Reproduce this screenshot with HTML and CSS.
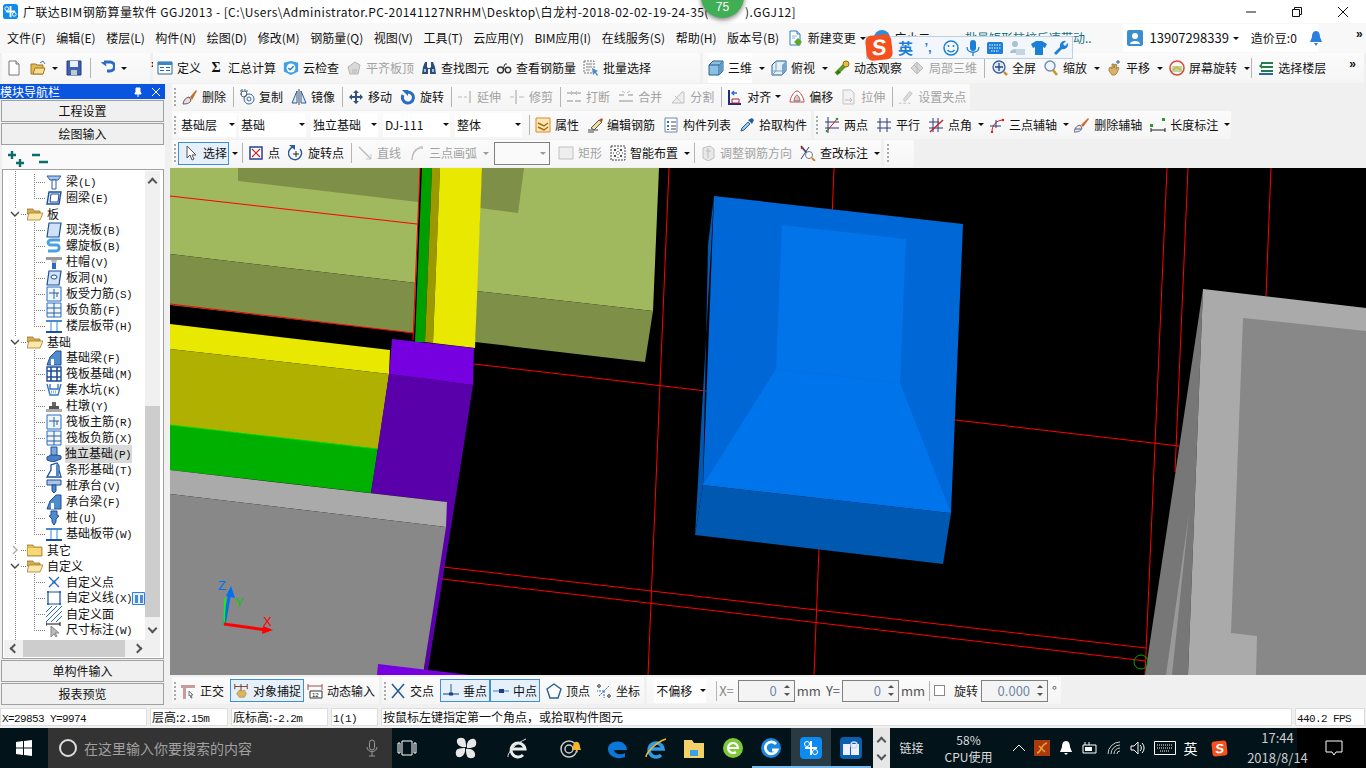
FILE: index.html
```html
<!DOCTYPE html>
<html lang="zh-CN">
<head>
<meta charset="utf-8">
<title>广联达BIM钢筋算量软件 GGJ2013</title>
<link rel="stylesheet" href="styles.css">
</head>
<body>
<svg class="defs" aria-hidden="true">
<defs>
<symbol id="new" viewBox="0 0 16 16"><path d="M3 1h7l3 3v11H3z" fill="#fff" stroke="#777"/><path d="M10 1v3h3" fill="#ddd" stroke="#777"/></symbol>
<symbol id="chg" viewBox="0 0 16 16"><path d="M2 1h7l3 3v11H2z" fill="#fff" stroke="#2a7fc8"/><path d="M9 1v3h3" fill="#cfe4f6" stroke="#2a7fc8"/><path d="M4 6h5M4 8h3" stroke="#8ab4dc"/><path d="M10 8l4 4-4 4-4-4z" fill="#5aa82a"/></symbol>
<symbol id="open" viewBox="0 0 16 16"><path d="M1 4h5l1 1h6v9H1z" fill="#e3b857" stroke="#a07a25"/><path d="M3 14l2-6h10l-2 6z" fill="#f7dd8f" stroke="#a07a25"/><path d="M10 3l3-2 2 3" fill="none" stroke="#3a7bc8"/></symbol>
<symbol id="save" viewBox="0 0 16 16"><path d="M1 1h14v14H1z" fill="#3f5fb0" stroke="#223a80"/><path d="M4 1h8v6H4z" fill="#eef"/><path d="M5 10h6v5H5z" fill="#bcc"/></symbol>
<symbol id="undo" viewBox="0 0 16 16"><path d="M5 2h6a4 4 0 0 1 0 9H8" fill="none" stroke="#2a6cc4" stroke-width="3"/><path d="M2 2h5v5z" fill="#2a6cc4" transform="rotate(-10 4 4)"/></symbol>
<symbol id="def" viewBox="0 0 16 16"><path d="M1 2h14v12H1z" fill="#fff" stroke="#28689c"/><path d="M1 2h14v3H1z" fill="#3a86c0"/><path d="M3 7h4v1H3zM3 10h4v1H3zM9 7h4v1H9zM9 10h4v1H9z" fill="#28689c"/></symbol>
<symbol id="cloud" viewBox="0 0 18 18"><path d="M1 3l8-2 8 2v10l-8 4-8-4z" fill="#3ba0e6"/><circle cx="9" cy="9" r="5" fill="#fff"/><path d="M6 9l2 2 4-4" fill="none" stroke="#2b7fc4" stroke-width="1.6"/></symbol>
<symbol id="flat" viewBox="0 0 16 16"><path d="M2 7l7-5 5 3-2 9H4z" fill="#d8d8d8" stroke="#b5b5b5"/><path d="M6 9h5v5H6z" fill="#c8c8c8"/></symbol>
<symbol id="binoc" viewBox="0 0 16 16"><path d="M2 7l2-5h2v5l1 1h2l1-1V2h2l2 5 1 7H9V9H7v5H1z" fill="#2c4d78"/><path d="M3 9h2v3H3zM11 9h2v3h-2z" fill="#9bc0e8"/></symbol>
<symbol id="glass" viewBox="0 0 16 16"><circle cx="4.5" cy="10" r="3" fill="none" stroke="#333" stroke-width="1.4"/><circle cx="12" cy="10" r="2.7" fill="none" stroke="#333" stroke-width="1.4"/><path d="M7 9l2-5h2M7.5 9h2" fill="none" stroke="#333"/></symbol>
<symbol id="batch" viewBox="0 0 16 16"><path d="M1 1h10v12H1z" fill="#f4f4f4" stroke="#777" stroke-dasharray="2 1"/><path d="M3 4h6M3 7h6M3 10h4" stroke="#888"/><path d="M9 8l6 3-2 1 2 3-1 1-2-3-2 2z" fill="#4f8ac8"/></symbol>
<symbol id="cube" viewBox="0 0 16 16"><path d="M1 5l4-4h10v10l-4 4H1z" fill="#8cc0e4" stroke="#2a5f88"/><path d="M1 5h10v10M11 5l4-4" fill="none" stroke="#2a5f88"/><path d="M11 5l4-4v10l-4 4z" fill="#5d9cc8"/></symbol>
<symbol id="cube2" viewBox="0 0 16 16"><path d="M1 5l4-4h10v10l-4 4H1z" fill="#e4f0f8" stroke="#2a5f88"/><path d="M5 1v10H1M5 11l-4 4M5 11h10" stroke="#7aa4c0" fill="none"/><path d="M11 5l4-4v10l-4 4z" fill="#74a8cc"/></symbol>
<symbol id="orbit" viewBox="0 0 16 16"><path d="M2 14L12 4" stroke="#5a9a28" stroke-width="4"/><path d="M2 14l2-4 3 3z" fill="#2e6a12"/><circle cx="12" cy="4" r="3" fill="#e8c040" stroke="#8a7010"/></symbol>
<symbol id="local" viewBox="0 0 16 16"><path d="M2 8l6-6 6 6-6 6z" fill="#d8d8d8" stroke="#bbb"/><path d="M5 5l6 6M8 2v12" stroke="#bbb"/></symbol>
<symbol id="full" viewBox="0 0 16 16"><circle cx="7" cy="7" r="6" fill="#dce8f6" stroke="#3a5f96" stroke-width="1.3"/><path d="M7 3v8M3 7h8" stroke="#25477a" stroke-width="1.3"/><path d="M12 12l3 3" stroke="#c78a20" stroke-width="2.4"/></symbol>
<symbol id="zoom" viewBox="0 0 16 16"><circle cx="7" cy="6" r="5" fill="#eef4fb" stroke="#6f8eae" stroke-width="1.4"/><path d="M10 10l4 5" stroke="#c7972a" stroke-width="2.6"/></symbol>
<symbol id="hand" viewBox="0 0 16 16"><path d="M3 8l2-1 1 2V4h2v4l1-4 2 1-1 4 2-2 1 1-2 5-2 2H6L3 11z" fill="#dcb266" stroke="#8a6a2c" stroke-width=".7"/><path d="M12 0v4M10 2h4" stroke="#3a5f96"/></symbol>
<symbol id="screen" viewBox="0 0 16 16"><circle cx="8" cy="8" r="7" fill="none" stroke="#d84a3a" stroke-width="1.6"/><path d="M3 6h10v6H3z" fill="#b8d8a0"/><path d="M4 10l4-3 4 3" stroke="#d4b030" fill="none" stroke-width="1.4"/></symbol>
<symbol id="floor" viewBox="0 0 16 16"><path d="M3 3h12M3 7h12M3 11h12" stroke="#277a50" stroke-width="2"/><path d="M1 13h14v2H1z" fill="#2c66a8"/><path d="M1 6l3-3v6z" fill="#1d8a40"/></symbol>
<symbol id="del" viewBox="0 0 16 16"><path d="M1 15c1-5 3-6 6-7l2 3c-1 3-3 4-8 4z" fill="#f0d8e8" stroke="#555"/><path d="M8 8l6-7 1 1-5 9z" fill="#c86a2a"/></symbol>
<symbol id="copy" viewBox="0 0 16 16"><path d="M2 1h6v3M2 1v6" fill="none" stroke="#36689c" stroke-dasharray="2 1"/><circle cx="5" cy="5" r="3" fill="none" stroke="#666"/><circle cx="10" cy="10" r="5" fill="none" stroke="#36689c"/><circle cx="10" cy="10" r="2" fill="none" stroke="#36689c"/></symbol>
<symbol id="mirror" viewBox="0 0 16 16"><path d="M1 14L6 2v12zM15 14L10 2v12z" fill="#dfe9f5" stroke="#2c5a96"/><path d="M8 0v16" stroke="#444"/></symbol>
<symbol id="move" viewBox="0 0 16 16"><path d="M8 1l3 3H9v3h3V5l3 3-3 3V9H9v3h2l-3 3-3-3h2V9H4v2L1 8l3-3v2h3V4H5z" fill="#31507e"/></symbol>
<symbol id="rot" viewBox="0 0 16 16"><path d="M8 3a5.5 5.5 0 1 1-5 3" fill="none" stroke="#2a6cc4" stroke-width="3"/><path d="M2 1h6v6z" fill="#2a6cc4"/></symbol>
<symbol id="extend" viewBox="0 0 16 16"><path d="M1 8h4M7 8h3" stroke="#bbb"/><path d="M12 2h2v12h-2z" fill="#ccc"/></symbol>
<symbol id="trim" viewBox="0 0 16 16"><path d="M6 1h2v14H6z" fill="#ccc"/><path d="M1 8h4M10 8h5" stroke="#bbb"/></symbol>
<symbol id="break" viewBox="0 0 16 16"><path d="M1 4h14M1 12h6M9 12h6" stroke="#c4c4c4" stroke-width="2"/><path d="M5 2l2 2-2 2M11 2L9 4l2 2" stroke="#bbb" fill="none"/></symbol>
<symbol id="merge" viewBox="0 0 16 16"><path d="M1 12h14" stroke="#c4c4c4" stroke-width="2"/><path d="M1 6h5M10 6h5" stroke="#c4c4c4" stroke-width="2"/><path d="M4 2l3 2M12 2L9 4" stroke="#bbb"/></symbol>
<symbol id="split" viewBox="0 0 16 16"><path d="M2 14L12 3h2v11z" fill="#eee" stroke="#c0c0c0"/><path d="M5 7l7 7" stroke="#c8c8c8"/></symbol>
<symbol id="align" viewBox="0 0 16 16"><path d="M2 1v14h12" stroke="#222a7a" stroke-width="2" fill="none"/><path d="M5 10h7v4H5z" fill="none" stroke="#b02020"/><path d="M5 4h5M7 2L5 4l2 2" fill="none" stroke="#2a6cc4" stroke-width="1.4"/></symbol>
<symbol id="offset" viewBox="0 0 16 16"><path d="M1 13c0-4 4-11 7-11s7 7 7 11z" fill="#fff" stroke="#c44"/><path d="M5 12c0-3 2-6 3-6s3 3 3 6z" fill="#e9c0c0" stroke="#777"/></symbol>
<symbol id="stretch" viewBox="0 0 16 16"><path d="M2 1h8l3 3v11H2z" fill="#f2f2f2" stroke="#c4c4c4"/><path d="M4 11h7M9 9l2 2-2 2" fill="none" stroke="#bbb"/></symbol>
<symbol id="grips" viewBox="0 0 18 16"><path d="M1 15h3M6 15h3M11 15h3" stroke="#bbb"/><path d="M6 11l7-9 3 2-8 9z" fill="#ddd" stroke="#bbb"/></symbol>
<symbol id="attr" viewBox="0 0 16 16"><path d="M1 1h14v14H1z" fill="#fbe7b8" stroke="#e08a20"/><path d="M3 6l6 3 4-3M3 10l6 3 4-3" fill="none" stroke="#a06a10" stroke-width="1.4"/></symbol>
<symbol id="edit" viewBox="0 0 16 16"><path d="M1 13h10M1 15h6" stroke="#444"/><path d="M4 11l8-8 3 2-8 8z" fill="#f0e0a0" stroke="#555"/><path d="M12 3l3-2 1 2-2 2z" fill="#c43"/></symbol>
<symbol id="list" viewBox="0 0 16 16"><path d="M2 1h12v14H2z" fill="#fff" stroke="#6a8aae"/><path d="M4 4h2v2H4zM4 8h2v2H4zM4 12h2v1H4z" fill="#2a6cc4"/><path d="M8 5h5M8 9h5M8 12h5" stroke="#444"/></symbol>
<symbol id="pick" viewBox="0 0 16 16"><path d="M2 14l1-3 6-6 2 2-6 6z" fill="#9cc8ee" stroke="#2a5f96"/><path d="M9 3l4-2 2 2-2 4z" fill="#2a5f96"/></symbol>
<symbol id="two" viewBox="0 0 16 16"><path d="M1 5h14M1 11h14" stroke="#2c3a78"/><path d="M4 0v16" stroke="#2c3a78"/><path d="M3 14L13 2" stroke="#c22"/><circle cx="3" cy="14" r="1.3" fill="#2a9a2a"/><circle cx="13" cy="2" r="1.3" fill="#2a9a2a"/></symbol>
<symbol id="para" viewBox="0 0 16 16"><path d="M1 5h14M1 11h14M4 1v14M11 1v14" stroke="#2c3a78"/></symbol>
<symbol id="ang" viewBox="0 0 16 16"><path d="M1 11h14M1 5h10M5 1v14M10 1v14" stroke="#2c3a78"/><path d="M2 15L15 3" stroke="#c22" stroke-width="1.5"/></symbol>
<symbol id="arc3" viewBox="0 0 16 16"><path d="M3 15c0-7 4-12 12-12" fill="none" stroke="#c22"/><path d="M1 9h11M7 3v8" stroke="#2c3a78"/><circle cx="3" cy="15" r="1.2" fill="#c22"/><circle cx="14" cy="3" r="1.2" fill="#c22"/></symbol>
<symbol id="delax" viewBox="0 0 16 16"><path d="M0 15c1-5 3-6 6-7l2 3c-1 3-3 4-8 4z" fill="#efe6f2" stroke="#667"/><path d="M7 8l7-7 1 1-6 8z" fill="#c86a2a"/><path d="M1 12h6" stroke="#36689c"/></symbol>
<symbol id="dim" viewBox="0 0 16 16"><path d="M1 13h14M1 11v4M15 11v4" stroke="#222"/><rect x="0" y="7" width="3" height="3" fill="#2a9a2a"/><rect x="12" y="1" width="3" height="3" fill="#2a9a2a"/></symbol>
<symbol id="sel" viewBox="0 0 16 16"><path d="M4 1v12l3-3 2 5 2-1-2-4h4z" fill="#fff" stroke="#555"/></symbol>
<symbol id="pt" viewBox="0 0 16 16"><path d="M2 2h12v12H2z" fill="#fff" stroke="#2a3f9a" stroke-width="1.5"/><path d="M4 4l8 8M12 4l-8 8" stroke="#c22" stroke-width="1.2"/></symbol>
<symbol id="rotp" viewBox="0 0 16 16"><path d="M5 2a6.5 6.5 0 1 0 7 2" fill="none" stroke="#2c5a96" stroke-width="1.4"/><path d="M1 0h6v5z" fill="#2c5a96"/><path d="M8 6v6M5 9h6" stroke="#222"/></symbol>
<symbol id="lin" viewBox="0 0 16 16"><path d="M2 2l12 12" stroke="#bbb" stroke-width="1.4"/><path d="M14 14V9M14 14H9" stroke="#ccc"/></symbol>
<symbol id="arc" viewBox="0 0 16 16"><path d="M3 15C3 8 7 4 12 2" fill="none" stroke="#bbb" stroke-width="1.4"/><rect x="11" y="1" width="3" height="3" fill="#ccc"/></symbol>
<symbol id="rct" viewBox="0 0 16 16"><path d="M1 2h14v12H1z" fill="#eee" stroke="#c0c0c0"/></symbol>
<symbol id="smart" viewBox="0 0 16 16"><path d="M1 1h14v14H1z" fill="#f8f8f8" stroke="#444" stroke-dasharray="2 1"/><path d="M8 3v10M3 8h10" stroke="#444" stroke-dasharray="1 2"/><circle cx="5" cy="5" r="1" fill="#222"/><circle cx="11" cy="11" r="1" fill="#222"/><circle cx="11" cy="5" r="1" fill="#222"/><circle cx="5" cy="11" r="1" fill="#222"/></symbol>
<symbol id="adj" viewBox="0 0 16 16"><path d="M3 3l7-2 4 3v9l-6 3-5-3z" fill="#e8e8e8" stroke="#c0c0c0"/><path d="M6 6h5M8 3v10" stroke="#bbb"/></symbol>
<symbol id="chk" viewBox="0 0 16 16"><path d="M1 1l9 11" stroke="#2c3a78" stroke-width="1.6"/><path d="M1 14L9 2" stroke="#2c3a78"/><circle cx="9" cy="10" r="3.5" fill="#fff" stroke="#777"/><path d="M12 13l3 3" stroke="#c78a20" stroke-width="2"/><circle cx="2" cy="3" r="1.3" fill="#c22"/></symbol>
<symbol id="orth" viewBox="0 0 16 16"><path d="M1 2h14v3H1zM3 5h3v11H3z" fill="#c89a9a"/><path d="M9 8l4 4-2 0 1 3-1 0-1-3-1 1z" fill="#eee" stroke="#778"/></symbol>
<symbol id="snap" viewBox="0 0 18 18"><path d="M2 4h14M2 1v6M16 1v6M9 1v9" stroke="#7a4a3a" stroke-width="1.2"/><path d="M4 12l3-4 3 1 3-1 2 4-2 4H7z" fill="#dcb65e" stroke="#a88838" stroke-width=".7"/></symbol>
<symbol id="dyn" viewBox="0 0 16 16"><path d="M1 1v6M15 1v6M1 3h14" stroke="#a05050"/><path d="M3 8h12v7H3z" fill="#fff" stroke="#333"/><text x="5" y="14" font-size="6" font-family="Liberation Sans" fill="#111">12</text></symbol>
<symbol id="cross" viewBox="0 0 16 16"><path d="M2 1l12 14M14 1L2 15" stroke="#2a5f96" stroke-width="1.6"/></symbol>
<symbol id="perp" viewBox="0 0 16 16"><path d="M8 1v10" stroke="#2a5f96"/><path d="M0 11h16" stroke="#2a5f96" stroke-width="1.2"/><rect x="6" y="9.500" width="4" height="3" fill="#1a3f86"/></symbol>
<symbol id="mid" viewBox="0 0 16 16"><path d="M0 8h16" stroke="#6a9ad0" stroke-width="1.4"/><rect x="6" y="6" width="5" height="4" fill="#1a3f86"/></symbol>
<symbol id="vtx" viewBox="0 0 16 16"><path d="M8 1l7 5-3 9H4L1 6z" fill="#fff" stroke="#2a5f96" stroke-width="1.4"/></symbol>
<symbol id="coord" viewBox="0 0 16 16"><path d="M3 13l5-5 5-5M8 8v7M8 8H1" stroke="#2a6cc4" stroke-dasharray="2 1"/><circle cx="3" cy="3" r="1.300" fill="none" stroke="#333"/><circle cx="13" cy="13" r="1.300" fill="none" stroke="#333"/></symbol>
<symbol id="fold" viewBox="0 0 16 16"><path d="M0 3h6l1 2h8v9H0z" fill="#e8b94f" stroke="#9a7a34" stroke-width=".8"/><path d="M1 6h13v7H1z" fill="#f8d973"/></symbol>
<symbol id="foldo" viewBox="0 0 16 16"><path d="M0 3h6l1 2h6v3H0z" fill="#dca94a" stroke="#9a7a34" stroke-width=".8"/><path d="M0 14l2-7h14l-3 7z" fill="#fbe7a6" stroke="#a08232" stroke-width=".8"/></symbol>
<symbol id="t-beam" viewBox="0 0 16 16"><path d="M1 2h14l-3 4H4z" fill="#a7c6e8" stroke="#2a5fa8"/><path d="M6 6h4v9H6z" fill="#fff" stroke="#2a5fa8"/></symbol>
<symbol id="t-ring" viewBox="0 0 16 16"><path d="M3 2h12l-2 12H1z" fill="#dceaf8" stroke="#1d4f9a" stroke-width="1.4"/><path d="M5 4h8l-1 8H4z" fill="#fff" stroke="#1d4f9a"/></symbol>
<symbol id="t-slab" viewBox="0 0 16 16"><path d="M3 1h12l-2 14H1z" fill="#cfe2f6" stroke="#1d4f9a" stroke-width="1.2"/></symbol>
<symbol id="t-spi" viewBox="0 0 16 16"><path d="M14 2H6C1 2 1 7 5 7h6c3 0 3 6-1 6H2" fill="none" stroke="#4aa0e0" stroke-width="3"/></symbol>
<symbol id="t-cap" viewBox="0 0 16 16"><path d="M0 3h16v3H0z" fill="#999"/><path d="M5 6h6l-1 3H6z" fill="#bbb"/><path d="M6 9h4v6H6z" fill="#2a6cc4"/></symbol>
<symbol id="t-hole" viewBox="0 0 16 16"><path d="M3 1h12l-2 14H1z" fill="#cfe2f6" stroke="#1d4f9a" stroke-width="1.2"/><ellipse cx="8" cy="7" rx="3" ry="2" fill="#fff" stroke="#1d4f9a"/></symbol>
<symbol id="t-r1" viewBox="0 0 16 16"><path d="M1 1h14v14H1z" fill="#eef5fc" stroke="#2a6cc4"/><path d="M8 3v10M3 7h10M11 7v4" stroke="#2a5f96"/></symbol>
<symbol id="t-r2" viewBox="0 0 16 16"><path d="M1 1h14v14H1z" fill="#eef5fc" stroke="#2a6cc4"/><path d="M8 1v14M1 6h14M1 11h14" stroke="#2a5f96"/></symbol>
<symbol id="t-band" viewBox="0 0 16 16"><path d="M0 2h16v2H0z" fill="#4a8ad0"/><path d="M4 4h2v9H4zM10 4h2v9h-2z" fill="#9bc4ea"/><path d="M0 13h16v2H0z" fill="#1d4f9a"/></symbol>
<symbol id="t-fb" viewBox="0 0 16 16"><path d="M1 15l3-8 6-6h5v14z" fill="#4f8ccc" stroke="#1d4f9a"/><path d="M5 9h3v6H5z" fill="#fff"/></symbol>
<symbol id="t-raft" viewBox="0 0 16 16"><path d="M1 1h14v14H1z" fill="#fff" stroke="#1d4f9a" stroke-width="1.4"/><path d="M1 5h14M1 11h14M5 1v14M11 1v14" stroke="#1d4f9a" stroke-width="1.6"/></symbol>
<symbol id="t-pit" viewBox="0 0 16 16"><path d="M1 2l3 11h8l3-11M4 2v5h8V2" fill="none" stroke="#3a7ac0" stroke-width="1.4"/><path d="M5 10h6" stroke="#8ab4dc" stroke-dasharray="1 1" stroke-width="3"/></symbol>
<symbol id="t-pier" viewBox="0 0 16 16"><path d="M0 11h16v3H0z" fill="#aaa"/><path d="M3 8h10v3H3z" fill="#555"/><path d="M6 4h4v4H6z" fill="#666"/></symbol>
<symbol id="t-fnd" viewBox="0 0 16 16"><path d="M1 11l6-3 8 2v3l-8 3-6-2z" fill="#4a82c4" stroke="#1d4f9a"/><path d="M5 1h6v8H5z" fill="#7aa8d8" stroke="#1d4f9a"/></symbol>
<symbol id="t-str" viewBox="0 0 16 16"><path d="M1 15l4-7V3l6-2 2 3v4l2 7z" fill="#fff" stroke="#1d4f9a" stroke-width="1.3"/><path d="M10 2l3 2v11h-3z" fill="#4f8ccc"/></symbol>
<symbol id="t-pc" viewBox="0 0 16 16"><path d="M1 2h14v5H1z" fill="#a7c6e8" stroke="#1d4f9a"/><path d="M6 7h4v6l-2 2-2-2z" fill="#4f8ccc" stroke="#1d4f9a"/></symbol>
<symbol id="t-pile" viewBox="0 0 16 16"><path d="M5 1h6v4l2 1-3 3v3l-2 3-2-3V9L3 6l2-1z" fill="#4f8ccc" stroke="#1d4f9a"/></symbol>
<symbol id="t-cp" viewBox="0 0 16 16"><path d="M3 3l10 10M13 3L3 13" stroke="#2a6cc4" stroke-width="1.4"/><circle cx="8" cy="8" r="1.5" fill="#2a6cc4"/></symbol>
<symbol id="t-cl" viewBox="0 0 16 16"><path d="M2 2h12v12H2z" fill="none" stroke="#1d4f9a" stroke-width="1.2"/><path d="M1 1h2v2H1zM13 1h2v2h-2zM1 13h2v2H1zM13 13h2v2h-2z" fill="#2a6cc4"/></symbol>
<symbol id="t-cf" viewBox="0 0 16 16"><path d="M1 1h14v14H1z" fill="#fff"/><path d="M0 6l6-6M0 11L11 0M0 16L16 0M5 16L16 5M10 16l6-6" stroke="#2a6cc4"/></symbol>
<symbol id="t-dim" viewBox="0 0 16 16"><path d="M0 2h14M0 0v4M14 0v4" stroke="#111"/><path d="M5 4v11l3-3 2 3 1-1-2-3h4z" fill="#bbb" stroke="#888"/></symbol>
</defs>
</svg>

<div class="app">
  <header class="title">
    <svg class="appicon" viewBox="0 0 16 16"><rect width="16" height="16" rx="3" fill="#0d8bf0"/><path d="M8 2v12M3 8h10" stroke="#fff" stroke-width="2"/><circle cx="4" cy="5" r="2" fill="none" stroke="#fff"/><circle cx="12" cy="11" r="2" fill="none" stroke="#fff"/></svg>
    <span class="title-text">广联达BIM钢筋算量软件 GGJ2013 - [C:\Users\Administrator.PC-20141127NRHM\Desktop\白龙村-2018-02-02-19-24-35(</span>
    <span class="title-end">).GGJ12]</span>
    <div class="winbtns">
      <span class="wb"><svg viewBox="0 0 12 12"><path d="M1 6h10" stroke="#111"/></svg></span>
      <span class="wb"><svg viewBox="0 0 12 12"><path d="M1.500 3.500h7v7h-7zM3.500 3.500v-2h7v7h-2" fill="none" stroke="#111"/></svg></span>
      <span class="wb"><svg viewBox="0 0 12 12"><path d="M1 1l10 10M11 1L1 11" stroke="#111"/></svg></span>
    </div>
  </header>

  <nav class="menu">
    <span>文件(F)</span><span>编辑(E)</span><span>楼层(L)</span><span>构件(N)</span><span>绘图(D)</span><span>修改(M)</span><span>钢筋量(Q)</span><span>视图(V)</span><span>工具(T)</span><span>云应用(Y)</span><span>BIM应用(I)</span><span>在线服务(S)</span><span>帮助(H)</span><span>版本号(B)</span>
    <span class="it"><svg class="ic"><use href="#chg"/></svg>新建变更<i class="dd"></i></span>
    <span class="it xiao"><svg class="ic"><circle cx="8" cy="8" r="8" fill="#2a8fe0"/></svg>广小二</span>
    <span class="notice">批量矩形柱校后凄带动..</span>
    <span class="user">
      <svg class="ic"><rect width="16" height="16" rx="2" fill="#3b8fd0"/><circle cx="8" cy="6" r="3" fill="#fff"/><path d="M3 14c0-4 10-4 10 0z" fill="#fff"/></svg>
      <span class="phone">13907298339</span><i class="dd"></i><span class="bean">造价豆:0</span>
      <svg class="ic"><path d="M8 1c3 0 4 3 4 6l2 5H2l2-5c0-3 1-6 4-6zM6 13h4l-2 3z" fill="#2a7fe0"/></svg>
    </span>
    <span class="more">»</span>
  </nav>

  <div class="bar1">
    <div class="grp g1">
      <svg class="ic"><use href="#new"/></svg>
      <span class="pair"><svg class="ic"><use href="#open"/></svg><i class="dd"></i></span>
      <svg class="ic"><use href="#save"/></svg>
      <i class="sep"></i>
      <span class="pair"><svg class="ic"><use href="#undo"/></svg><i class="dd"></i></span>
      <span class="more mr">»</span>
    </div>
    <div class="grp g2">
      <span class="it"><svg class="ic"><use href="#def"/></svg>定义</span>
      <span class="it"><b class="sigma">Σ</b>汇总计算</span>
      <span class="it"><svg class="ic"><use href="#cloud"/></svg>云检查</span>
      <span class="it off"><svg class="ic"><use href="#flat"/></svg>平齐板顶</span>
      <span class="it"><svg class="ic"><use href="#binoc"/></svg>查找图元</span>
      <span class="it"><svg class="ic"><use href="#glass"/></svg>查看钢筋量</span>
      <span class="it"><svg class="ic"><use href="#batch"/></svg>批量选择</span>
    </div>
    <div class="grp g3">
      <span class="it on3"><svg class="ic"><use href="#cube"/></svg>三维</span><i class="dd"></i>
      <span class="it"><svg class="ic"><use href="#cube2"/></svg>俯视</span><i class="dd"></i>
      <span class="it"><svg class="ic"><use href="#orbit"/></svg>动态观察</span>
      <span class="it off"><svg class="ic"><use href="#local"/></svg>局部三维</span>
      <i class="sep"></i>
      <span class="it"><svg class="ic"><use href="#full"/></svg>全屏</span>
      <span class="it"><svg class="ic"><use href="#zoom"/></svg>缩放</span><i class="dd"></i>
      <span class="it"><svg class="ic"><use href="#hand"/></svg>平移</span><i class="dd"></i>
      <span class="it"><svg class="ic"><use href="#screen"/></svg>屏幕旋转</span><i class="dd"></i>
      <i class="sep sep-last"></i>
      <span class="it"><svg class="ic"><use href="#floor"/></svg>选择楼层</span>
      <span class="more ml">»</span>
    </div>
  </div>

  <div class="main">
    <aside class="side">
      <div class="side-head"><span>模块导航栏</span>
        <span class="side-tools"><svg viewBox="0 0 10 10"><path d="M3 1h4v4l1 1v1H2V6l1-1zM5 7v3" stroke="#fff" fill="#fff"/></svg><svg viewBox="0 0 10 10"><path d="M1 1l8 8M9 1L1 9" stroke="#fff"/></svg></span>
      </div>
      <div class="sbtn">工程设置</div>
      <div class="sbtn">绘图输入</div>
      <div class="expand">
        <svg viewBox="0 0 18 18"><path d="M4 1v8M0 5h8M12 9v8M8 13h8" stroke="#0b6c6c" stroke-width="2.4"/></svg>
        <svg viewBox="0 0 18 18"><path d="M1 5h8M8 12h9" stroke="#0b6c6c" stroke-width="2.4"/></svg>
      </div>
      <div class="frame">
        <div class="treewrap">
          <div class="tree">
            <div class="leaf"><svg class="ic"><use href="#t-beam"/></svg><span>梁<i class="m">(L)</i></span></div>
            <div class="leaf end"><svg class="ic"><use href="#t-ring"/></svg><span>圈梁<i class="m">(E)</i></span></div>
            <div class="fold"><svg class="chev"><path d="M1 3l4 4 4-4" fill="none" stroke="#444" stroke-width="1.4"/></svg><svg class="ic"><use href="#foldo"/></svg><span>板</span></div>
            <div class="leaf"><svg class="ic"><use href="#t-slab"/></svg><span>现浇板<i class="m">(B)</i></span></div>
            <div class="leaf"><svg class="ic"><use href="#t-spi"/></svg><span>螺旋板<i class="m">(B)</i></span></div>
            <div class="leaf"><svg class="ic"><use href="#t-cap"/></svg><span>柱帽<i class="m">(V)</i></span></div>
            <div class="leaf"><svg class="ic"><use href="#t-hole"/></svg><span>板洞<i class="m">(N)</i></span></div>
            <div class="leaf"><svg class="ic"><use href="#t-r1"/></svg><span>板受力筋<i class="m">(S)</i></span></div>
            <div class="leaf"><svg class="ic"><use href="#t-r2"/></svg><span>板负筋<i class="m">(F)</i></span></div>
            <div class="leaf end"><svg class="ic"><use href="#t-band"/></svg><span>楼层板带<i class="m">(H)</i></span></div>
            <div class="fold"><svg class="chev"><path d="M1 3l4 4 4-4" fill="none" stroke="#444" stroke-width="1.4"/></svg><svg class="ic"><use href="#foldo"/></svg><span>基础</span></div>
            <div class="leaf"><svg class="ic"><use href="#t-fb"/></svg><span>基础梁<i class="m">(F)</i></span></div>
            <div class="leaf"><svg class="ic"><use href="#t-raft"/></svg><span>筏板基础<i class="m">(M)</i></span></div>
            <div class="leaf"><svg class="ic"><use href="#t-pit"/></svg><span>集水坑<i class="m">(K)</i></span></div>
            <div class="leaf"><svg class="ic"><use href="#t-pier"/></svg><span>柱墩<i class="m">(Y)</i></span></div>
            <div class="leaf"><svg class="ic"><use href="#t-r1"/></svg><span>筏板主筋<i class="m">(R)</i></span></div>
            <div class="leaf"><svg class="ic"><use href="#t-r2"/></svg><span>筏板负筋<i class="m">(X)</i></span></div>
            <div class="leaf"><svg class="ic"><use href="#t-fnd"/></svg><span class="cur">独立基础<i class="m">(P)</i></span></div>
            <div class="leaf"><svg class="ic"><use href="#t-str"/></svg><span>条形基础<i class="m">(T)</i></span></div>
            <div class="leaf"><svg class="ic"><use href="#t-pc"/></svg><span>桩承台<i class="m">(V)</i></span></div>
            <div class="leaf"><svg class="ic"><use href="#t-fb"/></svg><span>承台梁<i class="m">(F)</i></span></div>
            <div class="leaf"><svg class="ic"><use href="#t-pile"/></svg><span>桩<i class="m">(U)</i></span></div>
            <div class="leaf end"><svg class="ic"><use href="#t-band"/></svg><span>基础板带<i class="m">(W)</i></span></div>
            <div class="fold"><svg class="chev"><path d="M3 1l4 4-4 4" fill="none" stroke="#aaa" stroke-width="1.4"/></svg><svg class="ic"><use href="#fold"/></svg><span>其它</span></div>
            <div class="fold"><svg class="chev"><path d="M1 3l4 4 4-4" fill="none" stroke="#444" stroke-width="1.4"/></svg><svg class="ic"><use href="#foldo"/></svg><span>自定义</span></div>
            <div class="leaf"><svg class="ic"><use href="#t-cp"/></svg><span>自定义点</span></div>
            <div class="leaf"><svg class="ic"><use href="#t-cl"/></svg><span>自定义线<i class="m">(X)</i></span><svg class="tag"><path d="M.5 .5h12v12H.5z" fill="#e4f0fb" stroke="#2a7fe0"/><path d="M3 3h3v8H3zM8 3h3v8H8z" fill="#4a8ad0"/></svg></div>
            <div class="leaf"><svg class="ic"><use href="#t-cf"/></svg><span>自定义面</span></div>
            <div class="leaf end"><svg class="ic"><use href="#t-dim"/></svg><span>尺寸标注<i class="m">(W)</i></span></div>
          </div>
          <div class="vbar"><span class="up"></span><span class="vsp1"></span><span class="vthumb"></span><span class="vsp2"></span><span class="down"></span></div>
        </div>
        <div class="hbar"><span class="lf"></span><span class="hthumb"></span><span class="rt"></span></div>
      </div>
      <div class="sbtn">单构件输入</div>
      <div class="sbtn">报表预览</div>
    </aside>

    <section class="work">
      <div class="tbar h26">
        <div class="grp">
          <i class="grip"></i>
          <span class="it"><svg class="ic"><use href="#del"/></svg>删除</span><i class="sep"></i>
          <span class="it"><svg class="ic"><use href="#copy"/></svg>复制</span>
          <span class="it"><svg class="ic"><use href="#mirror"/></svg>镜像</span><i class="sep"></i>
          <span class="it"><svg class="ic"><use href="#move"/></svg>移动</span>
          <span class="it"><svg class="ic"><use href="#rot"/></svg>旋转</span><i class="sep"></i>
          <span class="it off"><svg class="ic"><use href="#extend"/></svg>延伸</span>
          <span class="it off"><svg class="ic"><use href="#trim"/></svg>修剪</span><i class="sep"></i>
          <span class="it off"><svg class="ic"><use href="#break"/></svg>打断</span>
          <span class="it off"><svg class="ic"><use href="#merge"/></svg>合并</span>
          <span class="it off"><svg class="ic"><use href="#split"/></svg>分割</span><i class="sep"></i>
          <span class="it"><svg class="ic"><use href="#align"/></svg>对齐<i class="dd tight"></i></span>
          <span class="it"><svg class="ic"><use href="#offset"/></svg>偏移</span>
          <span class="it off"><svg class="ic"><use href="#stretch"/></svg>拉伸</span><i class="sep"></i>
          <span class="it off"><svg class="ic"><use href="#grips"/></svg>设置夹点</span>
        </div>
      </div>
      <div class="tbar h28">
        <div class="grp">
          <i class="grip"></i>
          <span class="cb w57">基础层<i class="dd"></i></span>
          <span class="cb">基础<i class="dd"></i></span>
          <span class="cb">独立基础<i class="dd"></i></span>
          <span class="cb">DJ-111<i class="dd"></i></span>
          <span class="cb cb-last">整体<i class="dd"></i></span>
          <i class="sep"></i>
          <span class="it"><svg class="ic"><use href="#attr"/></svg>属性</span>
          <span class="it"><svg class="ic"><use href="#edit"/></svg>编辑钢筋</span>
          <span class="it"><svg class="ic"><use href="#list"/></svg>构件列表</span>
          <span class="it"><svg class="ic"><use href="#pick"/></svg>拾取构件</span>
        </div>
        <div class="grp">
          <i class="grip"></i>
          <span class="it"><svg class="ic"><use href="#two"/></svg>两点</span>
          <span class="it"><svg class="ic"><use href="#para"/></svg>平行</span>
          <span class="it"><svg class="ic"><use href="#ang"/></svg>点角</span><i class="dd"></i>
          <span class="it"><svg class="ic"><use href="#arc3"/></svg>三点辅轴</span><i class="dd"></i>
          <span class="it"><svg class="ic"><use href="#delax"/></svg>删除辅轴</span>
          <span class="it"><svg class="ic"><use href="#dim"/></svg>长度标注</span><i class="dd"></i>
        </div>
      </div>
      <div class="tbar h28">
        <div class="grp">
          <i class="grip"></i>
          <span class="it selbox"><svg class="ic"><use href="#sel"/></svg>选择</span><i class="dd"></i><i class="sep"></i>
          <span class="it"><svg class="ic"><use href="#pt"/></svg>点</span>
          <span class="it"><svg class="ic"><use href="#rotp"/></svg>旋转点</span><i class="sep"></i>
          <span class="it off"><svg class="ic"><use href="#lin"/></svg>直线</span>
          <span class="it off"><svg class="ic"><use href="#arc"/></svg>三点画弧</span><i class="dd off"></i>
          <span class="emptycb"><i class="dd off"></i></span>
          <span class="it off"><svg class="ic"><use href="#rct"/></svg>矩形</span>
          <span class="it"><svg class="ic"><use href="#smart"/></svg>智能布置</span><i class="dd"></i><i class="sep"></i>
          <span class="it off"><svg class="ic"><use href="#adj"/></svg>调整钢筋方向</span>
          <span class="it"><svg class="ic"><use href="#chk"/></svg>查改标注</span><i class="dd"></i>
        </div>
        <div class="grp stub"><i class="grip"></i></div>
      </div>

      <svg class="scene" viewBox="170 168 1196 507">
        <rect x="170" y="168" width="1196" height="507" fill="#000"/>
        <g fill="none" stroke="#f00" stroke-width="1">
          <path d="M669 168L648 675"/><path d="M834 168L814 675"/><path d="M1167 168L1145 675"/><path d="M1188 168L1175 472"/><path d="M1271 168L1266 296"/>
          <path d="M474 364L1179 446"/><path d="M443 567L1146 648"/><path d="M442 579L1146 661"/>
        </g>
        <path fill="#a0b85e" d="M170 168H420L416 283L170 254Z"/>
        <path fill="#7e8f48" d="M238 168H420L418 202L238 181Z"/>
        <path fill="#7e8f48" d="M170 254L416 283L414 333L170 305Z"/>
        <path fill="#a0b85e" d="M482 168H659L653 311L476 291Z"/>
        <path fill="#7e8f48" d="M482 168H524L518 213L480 208Z"/>
        <path fill="#7e8f48" d="M476 291L653 311L645 362L475 342Z"/>
        <path fill="none" stroke="#f00" d="M170 196L417 224M170 304L413 333M420 168L413 340"/>
        <path fill="#009f00" d="M422 168H432L425 342H415Z"/>
        <path fill="#9a9a00" d="M432 168H440L433 343L425 342Z"/>
        <path fill="#e8e800" d="M440 168H482L475 348L433 343Z"/>
        <path fill="#e8e800" d="M170 324L390 350L389 374L170 349Z"/>
        <path fill="#b0b000" d="M170 349L389 374L378 449L170 425Z"/>
        <path fill="#00b000" d="M170 425L378 449L371 493L170 470Z"/>
        <path fill="none" stroke="#00e000" d="M170 425L378 449"/>
        <path fill="#5a00aa" d="M389 374L473 385L455 502L428 670H424L447 502L371 493Z"/>
        <path fill="#7700e0" d="M392 339L474 348L473 385L389 374Z"/>
        <path fill="#aaa" d="M170 470L447 502L446 527L170 494Z"/>
        <path fill="#888" d="M170 494L446 527L424 668V675H170Z"/>
        <path fill="#7700e0" d="M378 664L470 675H377Z"/>
        <path fill="#0067d6" d="M714 196L963 224L951 513L703 485Z"/>
        <path fill="#0058b0" d="M714 196L708 245L703 485L695 535Z"/>
        <path fill="#0074e8" d="M782 225L906 239L900 383L776 369Z"/>
        <path fill="#0074ea" d="M776 369L900 383L951 513L703 485Z"/>
        <path fill="#0058b0" d="M703 485L951 513L943 564L695 535Z"/>
        <path fill="#777" d="M1203 289L1188 675H1145Z"/>
        <path fill="#999" d="M1189 513L1172 675H1166Z"/>
        <path fill="#aaa" d="M1203 289L1366 308V675H1188Z"/>
        <path fill="#888" d="M1243 318L1366 331V675H1256L1257 636L1231 633Z"/>
        <circle cx="1141" cy="662" r="7" fill="none" stroke="#0a0"/>
        <path stroke="#0070f0" stroke-width="3" d="M224 625L230 592"/><path fill="#0070f0" d="M231 586L235 598L226 596Z"/>
        <path stroke="#0f0" stroke-width="1.500" d="M224 625L225 598"/>
        <path stroke="#f00" stroke-width="3" d="M224 624L266 630"/><path fill="#f00" d="M273 630L262 634L263 626Z"/>
        <text class="ax" x="218" y="590" fill="#0070f0">Z</text><text class="ax" x="235" y="607" fill="#0c0">Y</text><text class="ax" x="263" y="626" fill="#f00">X</text>
      </svg>

      <div class="tbar snapbar">
        <div class="grp">
          <i class="grip"></i>
          <span class="it"><svg class="ic"><use href="#orth"/></svg>正交</span>
          <span class="it box box1"><svg class="ic"><use href="#snap"/></svg>对象捕捉</span>
          <span class="it"><svg class="ic"><use href="#dyn"/></svg>动态输入</span>
        </div>
        <div class="grp">
          <i class="grip"></i>
          <span class="it"><svg class="ic"><use href="#cross"/></svg>交点</span>
          <span class="boxes"><span class="it box"><svg class="ic"><use href="#perp"/></svg>垂点</span><span class="it box"><svg class="ic"><use href="#mid"/></svg>中点</span></span>
          <span class="it"><svg class="ic"><use href="#vtx"/></svg>顶点</span>
          <span class="it"><svg class="ic"><use href="#coord"/></svg>坐标</span>
        </div>
        <div class="grp nogap">
          <span class="cb w52">不偏移<i class="dd"></i></span>
          <i class="sep"></i><span class="lbl off2">X=</span>
          <span class="num n57">0<i class="spin"></i></span><span class="lbl">mm</span><span class="lbl ylbl">Y=</span>
          <span class="num n57">0<i class="spin"></i></span><span class="lbl">mm</span><i class="sep sep2"></i>
          <i class="cbx"></i><span class="lbl rot">旋转</span>
          <span class="num n67">0.000<i class="spin"></i></span><span class="lbl deg">°</span>
        </div>
      </div>
    </section>
  </div>

  <footer class="status">
    <span class="cell c1"><i class="m">X=29853 Y=9974</i></span>
    <span class="cell c2">层高:<i class="m">2.15m</i></span>
    <span class="cell c3">底标高:<i class="m">-2.2m</i></span>
    <span class="cell c4"><i class="m">1(1)</i></span>
    <span class="cell c5">按鼠标左键指定第一个角点，或拾取构件图元</span>
    <span class="cell c6"><i class="m">440.2 FPS</i></span>
  </footer>

  <div class="taskbar">
    <span class="start"><svg viewBox="0 0 16 16"><path d="M0 2l7-1v6.500H0zM8 1l8-1v7.500H8zM0 8.500h7V15l-7-1zM8 8.500h8V16l-8-1z" fill="#fff"/></svg></span>
    <div class="search"><i class="ring"></i><span class="ph">在这里输入你要搜索的内容</span>
      <svg class="mic" viewBox="0 0 12 18"><rect x="3.500" y="1" width="5" height="10" rx="2.500" fill="none" stroke="#999"/><path d="M1 8c0 6 10 6 10 0M6 13v4M3 17h6" fill="none" stroke="#999"/></svg>
    </div>
    <span class="task tv"><svg viewBox="0 0 20 16"><path d="M5 1h10v14H5zM1 3h2v10H1zM17 3h2v10h-2z" fill="none" stroke="#fff"/></svg></span>
    <span class="task t52"><svg viewBox="0 0 24 24"><g fill="#e8e8e8"><path d="M12 11C6 12 2 8 3 4c1-3 7-3 8 0 1 2 1 5 1 7z"/><path d="M13 12c-1-6 3-10 7-9 3 1 3 7 0 8-2 1-5 1-7 1z"/><path d="M12 13c6-1 10 3 9 7-1 3-7 3-8 0-1-2-1-5-1-7z"/><path d="M11 12c1 6-3 10-7 9-3-1-3-7 0-8 2-1 5-1 7-1z"/></g></svg></span>
    <span class="task t52"><svg viewBox="0 0 24 24"><path d="M5 13h14a7 7 0 1 0-2 6" fill="none" stroke="#eee" stroke-width="3"/><path d="M2 21c-1-4 8-14 18-18" fill="none" stroke="#ddd"/></svg></span>
    <span class="task t52 t54"><svg viewBox="0 0 24 24"><circle cx="11" cy="13" r="8" fill="none" stroke="#ccc" stroke-width="1.500"/><circle cx="11" cy="13" r="4" fill="none" stroke="#ccc" stroke-width="1.500"/><path d="M15 11c0-7 7-7 7 0l1 3h-9zM17 15h3l-1 2z" fill="#f4b42a"/></svg></span>
    <span class="task t38"><svg viewBox="0 0 24 24"><path d="M3 13C3 4 21 2 22 14H9c1 5 8 5 11 3v4c-7 3-17 0-17-8z" fill="#0a78d8"/></svg></span>
    <span class="task t38"><svg viewBox="0 0 24 24"><path d="M6 13h13a7 7 0 1 0-2 6" fill="none" stroke="#2f9ae8" stroke-width="3.500"/><path d="M2 21c0-3 8-14 20-18" fill="none" stroke="#e8b830" stroke-width="1.500"/></svg></span>
    <span class="task t38"><svg viewBox="0 0 24 24"><path d="M2 4h8l2 3h10v15H2z" fill="#f4d26a"/><path d="M8 14h8v6H8z" fill="#3aa0e8"/></svg></span>
    <span class="task t38"><svg viewBox="0 0 24 24"><circle cx="12" cy="12" r="10" fill="#7ec83a"/><path d="M7 12h10a5 5 0 1 0-2 4" fill="none" stroke="#fff" stroke-width="2.200"/></svg></span>
    <span class="task t38 ul"><svg viewBox="0 0 24 24"><circle cx="12" cy="12" r="10" fill="#1a88e0"/><path d="M17 8a6 6 0 1 0 1 6h-5" fill="none" stroke="#fff" stroke-width="2.800"/></svg></span>
    <span class="task t40 act ul"><svg viewBox="0 0 24 24"><rect x="1" y="1" width="22" height="22" rx="4" fill="#0d8bf0"/><path d="M12 5v14M6 12h12" stroke="#fff" stroke-width="2"/><circle cx="8" cy="8" r="2.500" fill="none" stroke="#fff"/><circle cx="16" cy="16" r="2.500" fill="none" stroke="#fff"/></svg></span>
    <span class="task t40 ul"><svg viewBox="0 0 24 24"><rect x="1" y="1" width="22" height="22" rx="4" fill="#0a5fae"/><path d="M4 8h7v11H4zM12 8h8v11h-8z" fill="#eef"/><circle cx="15" cy="9" r="3" fill="none" stroke="#cde" stroke-width="1.500"/></svg></span>
    <span class="tscroll"><i class="up"></i><i class="down"></i></span>
    <span class="link">链接</span>
    <span class="cpu"><span>58%</span><span>CPU使用</span></span>
    <span class="tray">
      <svg viewBox="0 0 14 8" class="s14"><path d="M1 7l6-6 6 6" fill="none" stroke="#fff"/></svg>
      <svg viewBox="0 0 16 16" class="s16"><rect width="16" height="16" fill="#a83a10"/><path d="M3 13C8 12 6 5 13 3M5 6l6 6" stroke="#f0a030" fill="none" stroke-width="1.500"/></svg>
      <svg viewBox="0 0 16 16" class="s16"><path d="M8 1c3 0 4 3 4 6l2 5H2l2-5c0-3 1-6 4-6zM6 13h4l-2 2z" fill="#fff"/></svg>
      <svg viewBox="0 0 16 16" class="s16"><path d="M1 5h13v8H1z" fill="none" stroke="#fff"/><path d="M3 7h7v4H3z" fill="#fff"/><path d="M3 5V2M7 5V2" stroke="#fff"/></svg>
      <svg viewBox="0 0 16 16" class="s16"><path d="M2 14a12 12 0 0 1 12-12M5 14a9 9 0 0 1 9-9M8 14a6 6 0 0 1 6-6M11 14a3 3 0 0 1 3-3" fill="none" stroke="#ccc"/></svg>
      <svg viewBox="0 0 16 16" class="s16"><path d="M1 6h3l4-4v12l-4-4H1zM10 5a4 4 0 0 1 0 6M12 3a7 7 0 0 1 0 10" fill="none" stroke="#fff"/></svg>
      <svg viewBox="0 0 22 14" class="s22"><path d="M.5 .5h21v13H.5z" fill="none" stroke="#fff"/><path d="M3 4h16M3 7h16M6 10h10" stroke="#fff" stroke-dasharray="1 1"/></svg>
      <span class="ying">英</span>
      <span class="slogo small">S</span>
    </span>
    <span class="clock"><span>17:44</span><span>2018/8/14</span></span>
    <span class="notif"><svg viewBox="0 0 18 16"><path d="M1 1h16v11h-6l-2 3-2-3H1z" fill="none" stroke="#fff"/></svg></span>
  </div>
</div>

<div class="badge">75</div>
<div class="ime">
  <span class="slogo">S</span>
  <b class="ime-y">英</b>
  <span class="ime-p">’,</span>
  <svg viewBox="0 0 16 16"><circle cx="8" cy="8" r="7" fill="none" stroke="#1c7fd6" stroke-width="1.500"/><circle cx="5.500" cy="6" r="1" fill="#1c7fd6"/><circle cx="10.500" cy="6" r="1" fill="#1c7fd6"/><path d="M4.500 10c2 2.500 5 2.500 7 0" fill="none" stroke="#1c7fd6" stroke-width="1.300"/></svg>
  <svg viewBox="0 0 16 16"><rect x="5" y="0" width="6" height="11" rx="3" fill="#1c7fd6"/><path d="M2 7c0 7 12 7 12 0M8 13v3" fill="none" stroke="#1c7fd6" stroke-width="1.300"/></svg>
  <svg viewBox="0 0 16 16"><rect y="2" width="16" height="12" rx="1.500" fill="#1c7fd6"/><path d="M2 5h12M2 8h12M4 11h8" stroke="#fff" stroke-dasharray="1.500 1"/></svg>
  <svg viewBox="0 0 16 16"><circle cx="6" cy="4" r="3" fill="#a8c0d4"/><path d="M1 13c0-5 10-5 10 0z" fill="#a8c0d4"/><rect x="7" y="9" width="9" height="6" fill="#c4d4e0"/></svg>
  <svg viewBox="0 0 16 16"><path d="M5 1h6l5 3-2 4-2-1v8H4V7L2 8 0 4z" fill="#1c7fd6"/></svg>
  <svg viewBox="0 0 16 16"><path d="M15 3l-3 3-2-2 3-3a5 5 0 0 0-6 6L1 13l2 2 6-6a5 5 0 0 0 6-6z" fill="#1c7fd6"/></svg>
</div>
</body>
</html>
```

FILE: styles.css
```css
* { box-sizing: border-box; }
html, body { margin: 0; padding: 0; width: 1366px; height: 768px; overflow: hidden; }
body { position: relative; background: #f0f0f0; color: #111; font: 12px/16px "Noto Sans CJK SC", "Liberation Sans", sans-serif; }
i, b { font-style: normal; }
.defs { width: 0; height: 0; display: block; }
.app { display: flex; flex-direction: column; width: 1366px; height: 768px; }
.ic { width: 16px; height: 16px; flex: none; display: block; }
.m { font: 11px/16px "Liberation Mono", monospace; letter-spacing: -.6px; }

.title { height: 23px; background: #fff; display: flex; align-items: center; padding-left: 3px; }
.appicon { width: 15px; height: 15px; margin-right: 5px; flex: none; }
.title-text { white-space: nowrap; font-size: 12px; letter-spacing: .42px; width: 680px; flex: none; }
.title-end { white-space: nowrap; letter-spacing: .42px; margin-left: 42px; flex: 1; }
.winbtns { display: flex; flex: none; }
.wb { width: 46px; height: 23px; display: flex; align-items: center; justify-content: center; }
.wb svg { width: 12px; height: 12px; }

.menu { height: 30px; background: #f8f8f8; display: flex; align-items: center; gap: 10.6px; padding-left: 7px; position: relative; white-space: nowrap; }
.menu .it { margin-left: -2px; }
.menu .xiao { margin-left: -2px; }
.notice { color: #12707c; width: 127px; margin-left: 24px; overflow: hidden; flex: none; }
.user { display: flex; align-items: center; gap: 4px; background: #fff; height: 28px; padding: 0 4px; margin-left: 21px; width: 195px; flex: none; }
.phone { font-size: 13px; margin-left: 2px; }
.bean { margin: 0 7px 0 8px; }
.more { font: bold 12px/12px "Liberation Sans", sans-serif; margin-left: 27px; align-self: flex-start; margin-top: 5px; }
.mr { margin-left: 16px; }
.ml { margin-left: auto; margin-right: 4px; }

.dd { display: block; flex: none; width: 0; height: 0; border: 3px solid transparent; border-top: 3px solid #111; border-bottom-width: 0; }
.dd.off { border-top-color: #999; }
.sep { display: block; flex: none; width: 1px; height: 20px; background: #b4b4b4; }

.bar1 { height: 30px; display: flex; align-items: center; gap: 3px; padding: 0 2px; }
.grp { display: flex; align-items: center; gap: 8px; height: 100%; background: linear-gradient(#fbfbfb, #f5f5f5); padding: 0 4px 0 2px; white-space: nowrap; }
.g1 { width: 148px; padding-left: 4px; gap: 8px; flex: none; }
.g2 { width: 547px; padding-left: 4px; gap: 7px; flex: none; }
.g3 { flex: 1; min-width: 0; padding-left: 5px; gap: 7px; }
.g3 .dd { margin-right: -1px; }
.g3 .sep-last { margin: 0 -1px 0 -5px; }
.pair { display: flex; align-items: center; gap: 6px; }
.it { display: flex; align-items: center; gap: 4px; flex: none; }
.off { color: #a2a2a2; }
.sigma { width: 16px; font: bold 14px/16px "Liberation Serif", serif; text-align: center; }
.on3 { background: #fff; height: 100%; }

.main { height: 623px; display: flex; padding-top: 1px; }
.side { width: 165px; margin-right: 5px; padding-bottom: 1px; display: flex; flex-direction: column; flex: none; }
.side-head { height: 15px; background: #0a55e0; color: #fff; display: flex; align-items: center; justify-content: space-between; font-size: 12px; line-height: 15px; }
.side-tools { display: flex; gap: 8px; padding-right: 4px; }
.side-tools svg { width: 10px; height: 10px; }
.sbtn { height: 22px; margin: 1px 1px 0; background: #f0f0f0; border: 1px solid #a0a0a0; text-align: center; line-height: 20px; font-size: 12px; }
.expand { height: 24px; display: flex; align-items: center; gap: 5px; padding: 3px 0 0 6px; background: #fafafa; margin-left: 2px; }
.expand svg { width: 18px; height: 18px; }
.frame { flex: 1; min-height: 0; margin: 0 1px 0 2px; border: 1px solid #a0a0a0; padding: 1px; background: #fff; display: flex; flex-direction: column; }
.treewrap { flex: 1; min-height: 0; display: flex; }
.tree {
  flex: 1; min-width: 0; overflow: hidden; padding-top: 3px;
  background: repeating-linear-gradient(to bottom, #808080 0 1px, transparent 1px 2px) 11px 0 / 1px 100% no-repeat;
}
.leaf, .fold { height: 16px; display: flex; align-items: center; white-space: nowrap; }
.leaf {
  padding-left: 42px; gap: 4px;
  background:
    repeating-linear-gradient(to bottom, #808080 0 1px, transparent 1px 2px) 30px 0 / 1px 100% no-repeat,
    repeating-linear-gradient(to right, #808080 0 1px, transparent 1px 2px) 30px 8px / 12px 1px no-repeat;
}
.leaf.end {
  background:
    repeating-linear-gradient(to bottom, #808080 0 1px, transparent 1px 2px) 30px 0 / 1px 8px no-repeat,
    repeating-linear-gradient(to right, #808080 0 1px, transparent 1px 2px) 30px 8px / 12px 1px no-repeat;
}
.fold { padding-left: 6px; background: repeating-linear-gradient(to right, #808080 0 1px, transparent 1px 2px) 17px 8px / 6px 1px no-repeat; }
.chev { width: 10px; height: 10px; flex: none; background: #fff; margin-right: 7px; }
.fold .ic { margin-right: 4px; }
.cur { background: #d9d9d9; padding: 0 1px 0 0; margin-left: -1px; }
.tag { width: 13px; height: 13px; flex: none; margin-left: -4px; }
.vbar { width: 15px; flex: none; margin-right: 2px; background: #f0f0f0; display: flex; flex-direction: column; align-items: center; }
.vbar .up, .vbar .down, .tscroll .up, .tscroll .down { display: block; width: 7px; height: 7px; border: solid #555; border-width: 2px 0 0 2px; transform: rotate(45deg); }
.vbar .up { margin: 8px 0 2px; flex: none; }
.vbar .down { transform: rotate(225deg); margin: 2px 0 8px; flex: none; }
.vsp1 { height: 218px; flex: none; }
.vthumb { width: 15px; height: 211px; flex: none; background: #cdcdcd; }
.vsp2 { flex: 1; }
.hbar { height: 17px; background: #f0f0f0; display: flex; align-items: center; padding-left: 7px; flex: none; margin-right: 2px; }
.lf, .rt { display: block; width: 7px; height: 7px; border: solid #555; border-width: 0 0 2px 2px; transform: rotate(45deg); flex: none; }
.rt { transform: rotate(225deg); margin-left: 9px; }
.hthumb { width: 102px; height: 17px; background: #cdcdcd; margin-left: 5px; }

.work { flex: 1; min-width: 0; display: flex; flex-direction: column; }
.tbar { display: flex; gap: 3px; padding-left: 2px; }
.tbar .sep { margin: 0 -3px 0 -1px; }
.tbar .dd { margin: 0 -3px 0 -2px; }
.tbar .it > .dd { margin: 0; }
.tbar .emptycb .dd { margin: 0; }
.tbar .cb .dd { margin: 0; }
.h26 { height: 27px; padding-bottom: 1px; }
.h28 { height: 29px; padding-bottom: 1px; }
.grip { display: block; flex: none; width: 2px; height: 18px; background: repeating-linear-gradient(to bottom, #aaa 0 2px, transparent 2px 4px); margin-right: -2px; }
.cb { display: flex; align-items: center; justify-content: space-between; width: 67px; height: 24px; background: #fff; padding: 0 1px 0 2px; margin-right: -3px; flex: none; }
.cb-last { margin-right: 0; }
.w57 { width: 57px; margin-left: -3px; margin-right: -5px; }
.tbar .w52 { width: 52px; margin: 0; padding-right: 0; }
.selbox { border: 1px solid #3d8fd8; background: #e6f0fa; height: 23px; width: 51px; padding-left: 4px; gap: 4px; margin: 0 -3px 0 -4px; }
.emptycb { width: 56px; height: 23px; border: 1px solid #808080; background: #fafafa; display: flex; align-items: center; justify-content: flex-end; padding-right: 3px; flex: none; }
.stub { width: 30px; padding: 0 3px; }

.scene { display: block; width: 1196px; height: 507px; flex: none; margin: 0; }
.ax { font: 13px "Liberation Sans", sans-serif; }

.snapbar { height: 31px; align-items: center; }
.snapbar .grp { height: 27px; gap: 6px; }
.box { border: 1px solid #3d8fd8; background: #e6f0fa; height: 23px; padding: 0 2px; }
.box1 { margin-right: -3px; }
.boxes { display: flex; }
.snapbar .nogap { gap: 2px; padding-left: 7px; }
.snapbar .nogap .sep { margin: 0 0 0 8px; }
.snapbar .nogap .sep2 { margin: 0 0 0 2px; }
.lbl { flex: none; color: #555; font-size: 13px; }
.ylbl { margin-left: 3px; }
.off2 { color: #888; margin-right: 2px; }
.rot { margin: 0 1px 0 7px; color: #222; font-size: 12px; }
.deg { margin-left: 2px; }
.num { position: relative; display: block; height: 22px; border: 1px solid #808080; background: #f4f4f4; color: #7088a8; text-align: right; padding-right: 17px; line-height: 20px; flex: none; font-size: 13px; }
.n57 { width: 57px; }
.n67 { width: 67px; }
.spin { position: absolute; right: 4px; top: 4px; width: 0; height: 0; border: 3px solid transparent; border-bottom: 3px solid #555; border-top-width: 0; }
.spin::after { content: ""; position: absolute; left: -3px; top: 8px; width: 0; height: 0; border: 3px solid transparent; border-top: 3px solid #555; border-bottom-width: 0; }
.cbx { display: block; width: 11px; height: 11px; border: 1px solid #888; background: #fff; flex: none; margin-left: 2px; }

.status { height: 22px; display: flex; gap: 3px; padding: 2px 1px 2px 0; flex: none; }
.cell { background: #fff; border: 1px solid #ddd; line-height: 16px; padding-left: 1px; overflow: hidden; white-space: nowrap; }
.c1 { width: 147px; }
.c2 { width: 78px; }
.c3 { width: 97px; }
.c4 { width: 47px; }
.c5 { flex: 1; }
.c6 { width: 70px; }

.taskbar { height: 40px; flex: none; background: linear-gradient(to right, #02141a 1297px, #000 1297px); display: flex; align-items: center; color: #fff; }
.start { width: 48px; display: flex; justify-content: center; }
.start svg { width: 16px; height: 16px; }
.search { width: 344px; height: 40px; background: #333; display: flex; align-items: center; padding-left: 11px; color: #a0a0a0; flex: none; }
.ring { display: block; width: 18px; height: 18px; border: 2px solid #ddd; border-radius: 50%; flex: none; margin-right: 7px; }
.ph { flex: 1; font-size: 14px; }
.mic { width: 12px; height: 18px; margin-right: 14px; }
.task { height: 40px; display: flex; align-items: center; justify-content: center; flex: none; position: relative; }
.task svg { width: 24px; height: 24px; }
.tv { width: 30px; margin-right: 18px; }
.tv svg { width: 20px; height: 16px; }
.t52 { width: 52px; }
.t54 { margin-right: 2px; }
.t38 { width: 38.500px; }
.t40 { width: 40px; }
.act { background: #2a3a42; }
.ul::after { content: ""; position: absolute; left: 0; right: 0; bottom: 0; height: 2px; background: #76b9ed; }
.tscroll { width: 17px; height: 40px; background: #e6e6e6; display: flex; flex-direction: column; align-items: center; justify-content: space-around; margin-left: 2px; flex: none; padding: 6px 0; }
.tscroll .down { transform: rotate(225deg); }
.link { width: 44px; text-align: center; color: #ddd; flex: none; }
.cpu { width: 50px; margin-left: 10px; display: flex; flex-direction: column; align-items: center; flex: none; color: #ddd; line-height: 17px; white-space: nowrap; }
.tray { display: flex; align-items: center; gap: 8px; margin-left: 18px; flex: none; width: 232px; }
.s14 { width: 14px; height: 8px; flex: none; }
.s16 { width: 16px; height: 16px; flex: none; }
.s22 { width: 22px; height: 14px; flex: none; }
.ying { font-size: 14px; margin-right: 6px; flex: none; }
.clock { width: 68px; display: flex; flex-direction: column; align-items: center; line-height: 20px; color: #ccc; font-size: 13px; white-space: nowrap; flex: none; }
.notif { flex: 1; height: 40px; display: flex; align-items: center; justify-content: center; padding-right: 10px; }
.notif svg { width: 18px; height: 16px; }

.badge { position: absolute; left: 701px; top: -25px; width: 43px; height: 43px; border-radius: 50%; background: #3fae54; color: #fff; font: 12px/12px "Liberation Sans", sans-serif; text-align: center; padding-top: 26px; box-shadow: 0 2px 5px rgba(0, 0, 0, .5); }
.ime { position: absolute; left: 866px; top: 36px; width: 207px; height: 23px; background: #f3f7fb; border: 1px solid #bcd2e4; display: flex; align-items: center; gap: 6px; }
.ime svg { width: 16px; height: 16px; flex: none; }
.slogo { display: block; flex: none; width: 26px; height: 25px; border-radius: 6px; background: #f4511e; color: #fff; font: italic bold 22px/25px "Liberation Sans", sans-serif; text-align: center; margin-left: -1px; transform: rotate(-6deg); }
.slogo.small { width: 15px; height: 15px; font-size: 13px; line-height: 15px; border-radius: 3px; margin: 0; }
.ime-y { color: #1c7fd6; font-size: 15px; }
.ime-p { color: #1c7fd6; font: bold 13px/16px "Liberation Sans", sans-serif; width: 18px; text-align: center; }
```
